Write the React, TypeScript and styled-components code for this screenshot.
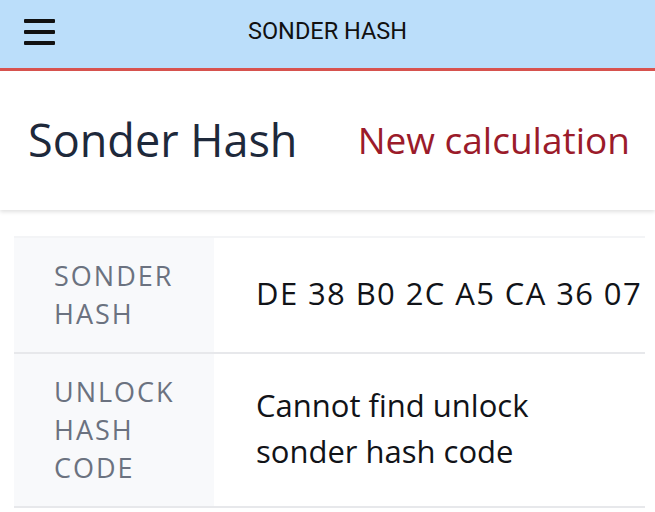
import styled, {createGlobalStyle} from "styled-components";

const GlobalStyle = createGlobalStyle`
    html, body {
        margin: 0;
        padding: 0;
        background: #ffffff;
    }
    body {
        width: 655px;
        height: 512px;
        overflow: hidden;
        font-family: "Open Sans", "Noto Sans", sans-serif;
    }
    * {
        box-sizing: border-box;
    }
`

type HashRowType = {
    label: string[]
    value: string
    code?: boolean
}

const rows: HashRowType[] = [
    {label: ["Sonder", "Hash"], value: "DE 38 B0 2C A5 CA 36 07", code: true},
    {label: ["Unlock", "Hash", "Code"], value: "Cannot find unlock sonder hash code"},
]

const MenuIcon = () => (
    <svg width="31" height="31" viewBox="0 0 31 31">
        <rect x="0" y="3" width="31" height="4" rx="1" fill="#111"/>
        <rect x="0" y="14" width="31" height="4" rx="1" fill="#111"/>
        <rect x="0" y="25" width="31" height="4" rx="1" fill="#111"/>
    </svg>
)

export default function App() {
    return (
        <>
            <GlobalStyle/>
            <Page>
                <TopBar>
                    <MenuButton><MenuIcon/></MenuButton>
                    <BarTitle>SONDER HASH</BarTitle>
                </TopBar>
                <Heading>
                    <Title>Sonder Hash</Title>
                    <Action>New calculation</Action>
                </Heading>
                <TableWrap>
                    <Table>
                        {rows.map((row) => (
                            <Row key={row.value}>
                                <Label>
                                    {row.label.map((l) => <span key={l}>{l}</span>)}
                                </Label>
                                <Value>
                                    <ValueText $code={row.code}>{row.value}</ValueText>
                                </Value>
                            </Row>
                        ))}
                    </Table>
                </TableWrap>
            </Page>
        </>
    )
}

const Page = styled.div`
    display: flex;
    flex-direction: column;
    width: 655px;
`

const TopBar = styled.header`
    position: relative;
    height: 71px;
    display: flex;
    align-items: center;
    justify-content: center;
    background: #bbdefa;
    border-bottom: 3px solid #d9534f;
`

const MenuButton = styled.div`
    position: absolute;
    left: 24px;
    top: 16px;
    width: 31px;
    height: 31px;
    display: flex;
`

const BarTitle = styled.span`
    font-family: Roboto, "Liberation Sans", sans-serif;
    font-size: 23.5px;
    color: #111;
    margin-bottom: 6px;
`

const Heading = styled.section`
    height: 139px;
    display: flex;
    align-items: center;
    justify-content: space-between;
    padding: 0 25px 2px 28px;
    background: #fff;
    box-shadow: 0 2px 4px rgba(0, 0, 0, 0.12);
    position: relative;
    z-index: 1;
`

const Title = styled.h1`
    margin: 0;
    font-size: 45px;
    font-weight: 400;
    color: #1e293b;
`

const Action = styled.a`
    font-size: 37px;
    color: #9b1b2a;
`

const TableWrap = styled.div`
    padding: 26px 10px 0 14px;
    overflow: hidden;
`

const Table = styled.div`
    display: flex;
    flex-direction: column;
    border-top: 2px solid #f3f4f6;
    overflow: hidden;
`

const Row = styled.div`
    display: flex;
    border-bottom: 2px solid #e7e8eb;
`

const Label = styled.div`
    width: 200px;
    flex-shrink: 0;
    display: flex;
    flex-direction: column;
    justify-content: center;
    padding: 19px 0 19px 40px;
    background: #f8f9fb;
    font-size: 27px;
    line-height: 38px;
    letter-spacing: 2px;
    text-transform: uppercase;
    color: #6b7280;
`

const Value = styled.div`
    flex: 1;
    display: flex;
    align-items: center;
    padding: 0 0 4px 42px;
    color: #111318;
`

const ValueText = styled.span<{ $code?: boolean }>`
    font-size: 31px;
    line-height: 46px;
    max-width: 340px;
    white-space: ${(p) => (p.$code ? "nowrap" : "normal")};
    letter-spacing: ${(p) => (p.$code ? "1.4px" : "0")};
`
